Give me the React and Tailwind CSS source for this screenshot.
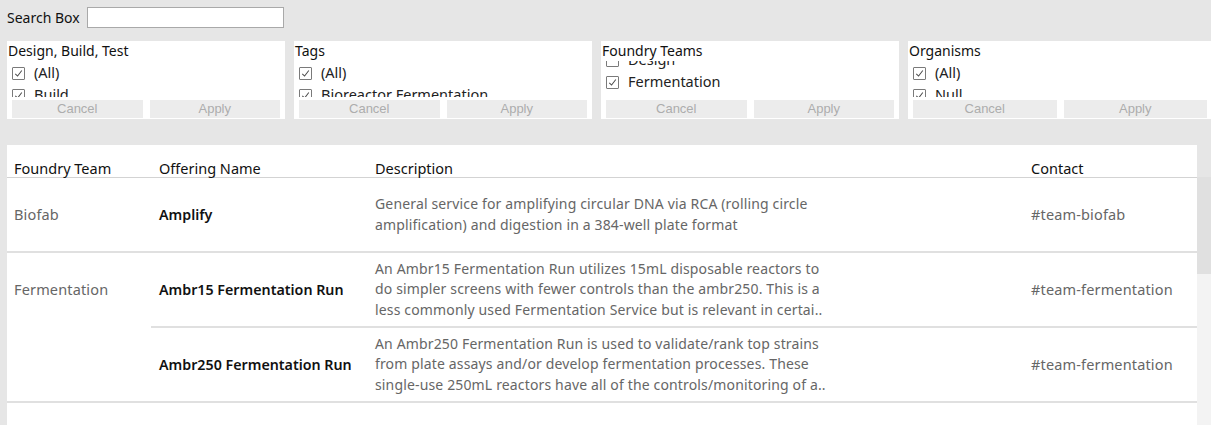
import React from 'react';

const filters = [
  { title: 'Design, Build, Test', width: 'w-[278px]', items: [['(All)', true], ['Build', true]], offset: '' },
  { title: 'Tags', width: 'w-[298px]', items: [['(All)', true], ['Bioreactor Fermentation', true]], offset: '' },
  { title: 'Foundry Teams', width: 'w-[298px]', items: [['Design', false], ['Fermentation', true], ['Other', false]], offset: '-mt-[13px]' },
  { title: 'Organisms', width: 'w-[304px]', items: [['(All)', true], ['Null', true]], offset: '' },
];

const rows = [
  {
    team: 'Biofab',
    offerings: [
      {
        name: 'Amplify',
        desc: ['General service for amplifying circular DNA via RCA (rolling circle', 'amplification) and digestion in a 384-well plate format'],
        contact: '#team-biofab',
      },
    ],
  },
  {
    team: 'Fermentation',
    offerings: [
      {
        name: 'Ambr15 Fermentation Run',
        desc: [
          'An Ambr15 Fermentation Run utilizes 15mL disposable reactors to',
          'do simpler screens with fewer controls than the ambr250. This is a',
          'less commonly used Fermentation Service but is relevant in certai..',
        ],
        contact: '#team-fermentation',
      },
      {
        name: 'Ambr250 Fermentation Run',
        desc: [
          'An Ambr250 Fermentation Run is used to validate/rank top strains',
          'from plate assays and/or develop fermentation processes. These',
          'single-use 250mL reactors have all of the controls/monitoring of a..',
        ],
        contact: '#team-fermentation',
      },
    ],
  },
];

function Checkbox({ checked }) {
  return (
    <span className="flex h-[13px] w-[13px] shrink-0 items-center justify-center rounded-[1px] border border-[#7a7a7a] bg-white">
      {checked && (
        <svg viewBox="0 0 12 12" className="h-[11px] w-[11px]" fill="none" stroke="#4a4a4a" strokeWidth="1.1">
          <path d="M2.5 6.3 L5 8.8 L9.6 2.8" />
        </svg>
      )}
    </span>
  );
}

function FilterPanel({ title, width, items, offset }) {
  return (
    <div className={`${width} shrink-0 h-[78px] bg-white flex flex-col`}>
      <div className="h-[20px] pl-[1px] pt-[2px] text-[14px] leading-[16px] text-[#111] relative z-10 bg-white">{title}</div>
      <div className="h-[36px] overflow-hidden">
        <div className={`pt-[1px] ${offset}`}>
          {items.map(([label, checked]) => (
            <div key={label} className="h-[22px] flex items-center gap-[9px] pl-[5px]">
              <Checkbox checked={checked} />
              <span className="text-[14.5px] text-[#222] whitespace-nowrap">{label}</span>
            </div>
          ))}
        </div>
      </div>
      <div className="flex gap-[7px] px-[5px] mt-[3px]">
        {['Cancel', 'Apply'].map((b) => (
          <div
            key={b}
            className="flex-1 h-[18px] bg-[#ececec] flex items-center justify-center text-[13px] text-[#adadad] font-['Liberation_Sans',sans-serif]"
          >
            {b}
          </div>
        ))}
      </div>
    </div>
  );
}

export default function App() {
  return (
    <div className="w-[1211px] h-[425px] overflow-hidden bg-[#e6e6e6] font-['Noto_Sans',sans-serif]">
      <div className="flex items-center h-[34px] pl-[7px] pt-[1px]">
        <span className="w-[80px] text-[14px] text-[#111]">Search Box</span>
        <div className="w-[197px] h-[21px] bg-white border border-[#a9a9a9]" />
      </div>

      <div className="flex pl-[7px] mt-[7px] gap-[9px]">
        {filters.map((f) => (
          <FilterPanel key={f.title} {...f} />
        ))}
      </div>

      <div className="flex mt-[26px] pl-[7px]">
        <div className="w-[1190px] h-[280px] bg-white">
          <div className="h-[33px] flex items-end border-b border-[#d3d3d3] text-[14.5px] leading-[18px] text-[#111]">
            <div className="w-[152px] pl-[7px]">Foundry Team</div>
            <div className="w-[216px]">Offering Name</div>
            <div className="w-[656px]">Description</div>
            <div className="flex-1">Contact</div>
          </div>
          {rows.map((g) => (
            <div key={g.team} className="flex border-b-2 border-[#e0e0e0]">
              <div className="w-[144px] shrink-0 pl-[7px] h-[73px] flex items-center text-[14.5px] tracking-[0.15px] text-[#666]">{g.team}</div>
              <div className="flex-1 flex flex-col">
                {g.offerings.map((o, i) => (
                  <div
                    key={o.name}
                    className={`flex items-center ${i < g.offerings.length - 1 ? 'border-b-2 border-[#e0e0e0] h-[75px]' : 'h-[73px]'}`}
                  >
                    <div className="w-[224px] pl-[8px] text-[14.25px] font-semibold text-[#111]">{o.name}</div>
                    <div className="w-[656px] text-[14px] tracking-[0.15px] leading-[20.5px] text-[#666]">
                      {o.desc.map((l) => (
                        <div key={l} className="whitespace-nowrap">{l}</div>
                      ))}
                    </div>
                    <div className="flex-1 text-[14.5px] tracking-[0.15px] text-[#666]">{o.contact}</div>
                  </div>
                ))}
              </div>
            </div>
          ))}
        </div>
        <div className="w-[14px] mt-[32px] bg-[#f3f3f3] flex flex-col">
          <div className="h-[97px] bg-[#e0e0e0]" />
        </div>
      </div>
    </div>
  );
}
